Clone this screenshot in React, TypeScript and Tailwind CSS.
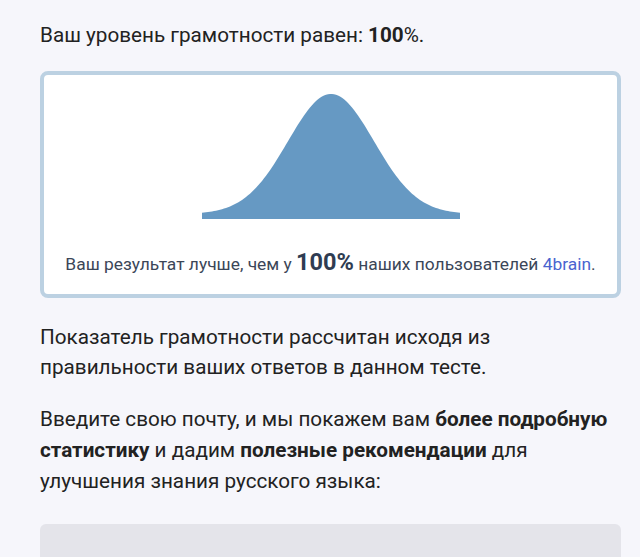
import React from "react";

// bell curve points, sigma tuned to the reference
const W = 258;
const H = 125;
const SIGMA = 43;
const PEAK = 120;

function bellPath() {
  const pts: string[] = [];
  for (let x = 0; x <= W; x += 2) {
    const d = x - W / 2;
    const y = H - 5 - PEAK * Math.exp(-(d * d) / (2 * SIGMA * SIGMA));
    pts.push(`${x},${y.toFixed(2)}`);
  }
  return `M0,${H} L${pts.join(" L")} L${W},${H} Z`;
}

export default function App() {
  return (
    <div className="min-h-[557px] bg-[#f6f6fb] pl-[40px] pr-[19px] pt-[20px] text-[#222] font-['Roboto',sans-serif]">
      <p className="text-[20.7px] leading-[30px]">
        Ваш уровень грамотности равен: <b className="font-bold">100</b>%.
      </p>

      <div className="mt-[21px] h-[227px] rounded-[8px] border-4 border-[#bcd1e2] bg-white flex flex-col items-center">
        <svg width={W} height={H} viewBox={`0 0 ${W} ${H}`} className="mt-[19px]">
          <path d={bellPath()} fill="#6699c3" />
        </svg>
        <p className="mt-[31px] text-[17.4px] text-[#3b4658] leading-[24px]">
          Ваш результат лучше, чем у{" "}
          <b className="text-[23.5px] font-bold text-[#2f3c52]">100%</b> наших
          пользователей <span className="text-[#4a64cf]">4brain</span>.
        </p>
      </div>

      <p className="mt-[24px] text-[20.7px] leading-[30px]">
        Показатель грамотности рассчитан исходя из правильности ваших ответов в
        данном тесте.
      </p>

      <p className="mt-[22px] text-[20.7px] leading-[31px]">
        Введите свою почту, и мы покажем вам{" "}
        <b className="font-bold">более подробную статистику</b> и дадим{" "}
        <b className="font-bold">полезные рекомендации</b> для улучшения знания
        русского языка:
      </p>

      <div className="mt-[27px] h-[60px] rounded-[6px] bg-[#e4e4ea]" />
    </div>
  );
}
